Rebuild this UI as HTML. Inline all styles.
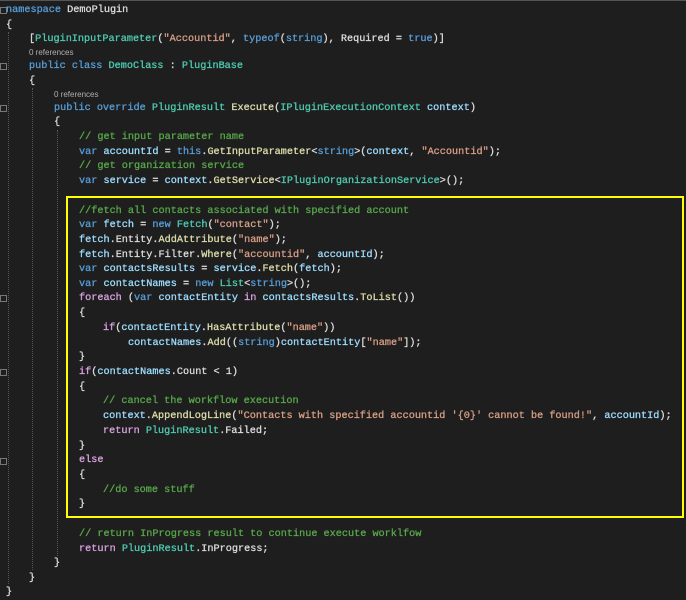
<!DOCTYPE html>
<html><head><meta charset="utf-8"><style>
body{margin:0;width:686px;height:599px;background:#1e1e1e;overflow:hidden;position:relative;font-family:"Liberation Mono",monospace;font-size:10.2px;color:#dcdcdc}
.l{position:absolute;white-space:pre;line-height:14px;height:14px;-webkit-text-stroke:0.3px currentColor;margin-top:1px}
.r{position:absolute;font-family:"Liberation Sans",sans-serif;font-size:8px;color:#b0b0b0;line-height:10px}
.k{color:#569cd6}.t{color:#4ec9b0}.s{color:#d69d85}.c{color:#57a64a}.m{color:#dcdcaa}.v{color:#9cdcfe}.p{color:#d8a0df}
.box{position:absolute;left:66px;top:196px;width:614px;height:318px;border:2px solid #ffff00}
.g{position:absolute;border-left:1px dotted #555;width:0}
.f{position:absolute;left:0;width:5px;height:5px;border:1px solid #777}
.top{position:absolute;left:0;top:0;width:686px;height:1px;background:#555}
</style></head><body>
<div class="top"></div>
<div class="g" style="left:8px;top:32px;height:552px"></div>
<div class="g" style="left:32px;top:88px;height:482px"></div>
<div class="g" style="left:57px;top:130px;height:426px"></div>
<div class="f" style="top:7px"></div><div class="f" style="top:63px"></div><div class="f" style="top:105px"></div><div class="f" style="top:295px"></div><div class="f" style="top:369px"></div><div class="f" style="top:458px"></div>
<div class="box"></div>
<div class="l" style="left:6px;top:3px"><span class="k">namespace</span> DemoPlugin</div>
<div class="l" style="left:6px;top:18px">{</div>
<div class="l" style="left:29px;top:32px">[<span class="t">PluginInputParameter</span>(<span class="s">"Accountid"</span>, <span class="k">typeof</span>(<span class="k">string</span>), Required = <span class="k">true</span>)]</div>
<div class="r" style="left:29px;top:48px">0 references</div>
<div class="l" style="left:29px;top:59px"><span class="k">public</span> <span class="k">class</span> <span class="t">DemoClass</span> : <span class="t">PluginBase</span></div>
<div class="l" style="left:29px;top:74px">{</div>
<div class="r" style="left:54px;top:90px">0 references</div>
<div class="l" style="left:54px;top:101px"><span class="k">public</span> <span class="k">override</span> <span class="t">PluginResult</span> <span class="m">Execute</span>(<span class="t">IPluginExecutionContext</span> <span class="v">context</span>)</div>
<div class="l" style="left:54px;top:115px">{</div>
<div class="l" style="left:79px;top:130px"><span class="c">// get input parameter name</span></div>
<div class="l" style="left:79px;top:145px"><span class="k">var</span> <span class="v">accountId</span> = <span class="k">this</span>.<span class="m">GetInputParameter</span>&lt;<span class="k">string</span>&gt;(<span class="v">context</span>, <span class="s">"Accountid"</span>);</div>
<div class="l" style="left:79px;top:159px"><span class="c">// get organization service</span></div>
<div class="l" style="left:79px;top:174px"><span class="k">var</span> <span class="v">service</span> = <span class="v">context</span>.<span class="m">GetService</span>&lt;<span class="t">IPluginOrganizationService</span>&gt;();</div>
<div class="l" style="left:79px;top:204px"><span class="c">//fetch all contacts associated with specified account</span></div>
<div class="l" style="left:79px;top:218px"><span class="k">var</span> <span class="v">fetch</span> = <span class="k">new</span> <span class="t">Fetch</span>(<span class="s">"contact"</span>);</div>
<div class="l" style="left:79px;top:233px"><span class="v">fetch</span>.Entity.<span class="m">AddAttribute</span>(<span class="s">"name"</span>);</div>
<div class="l" style="left:79px;top:248px"><span class="v">fetch</span>.Entity.Filter.<span class="m">Where</span>(<span class="s">"accountid"</span>, <span class="v">accountId</span>);</div>
<div class="l" style="left:79px;top:262px"><span class="k">var</span> <span class="v">contactsResults</span> = <span class="v">service</span>.<span class="m">Fetch</span>(<span class="v">fetch</span>);</div>
<div class="l" style="left:79px;top:277px"><span class="k">var</span> <span class="v">contactNames</span> = <span class="k">new</span> <span class="t">List</span>&lt;<span class="k">string</span>&gt;();</div>
<div class="l" style="left:79px;top:291px"><span class="p">foreach</span> (<span class="k">var</span> <span class="v">contactEntity</span> <span class="p">in</span> <span class="v">contactsResults</span>.<span class="m">ToList</span>())</div>
<div class="l" style="left:79px;top:306px">{</div>
<div class="l" style="left:103px;top:321px"><span class="p">if</span>(<span class="v">contactEntity</span>.<span class="m">HasAttribute</span>(<span class="s">"name"</span>))</div>
<div class="l" style="left:128px;top:336px"><span class="v">contactNames</span>.<span class="m">Add</span>((<span class="k">string</span>)<span class="v">contactEntity</span>[<span class="s">"name"</span>]);</div>
<div class="l" style="left:79px;top:350px">}</div>
<div class="l" style="left:79px;top:365px"><span class="p">if</span>(<span class="v">contactNames</span>.Count &lt; 1)</div>
<div class="l" style="left:79px;top:380px">{</div>
<div class="l" style="left:103px;top:394px"><span class="c">// cancel the workflow execution</span></div>
<div class="l" style="left:103px;top:409px"><span class="v">context</span>.<span class="m">AppendLogLine</span>(<span class="s">"Contacts with specified accountid '{0}' cannot be found!"</span>, <span class="v">accountId</span>);</div>
<div class="l" style="left:103px;top:424px"><span class="p">return</span> <span class="t">PluginResult</span>.Failed;</div>
<div class="l" style="left:79px;top:439px">}</div>
<div class="l" style="left:79px;top:453px"><span class="p">else</span></div>
<div class="l" style="left:79px;top:468px">{</div>
<div class="l" style="left:103px;top:483px"><span class="c">//do some stuff</span></div>
<div class="l" style="left:79px;top:497px">}</div>
<div class="l" style="left:79px;top:527px"><span class="c">// return InProgress result to continue execute worklfow</span></div>
<div class="l" style="left:79px;top:542px"><span class="p">return</span> <span class="t">PluginResult</span>.InProgress;</div>
<div class="l" style="left:54px;top:556px">}</div>
<div class="l" style="left:29px;top:571px">}</div>
<div class="l" style="left:6px;top:585px">}</div>
</body></html>
